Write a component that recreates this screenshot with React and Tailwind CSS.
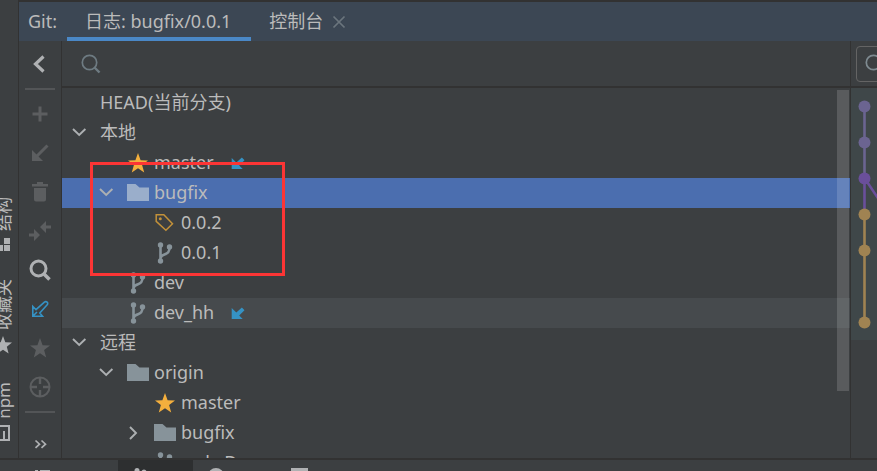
import clsx from 'clsx';

function Icon({ size = 22, className, children }) {
  return (
    <svg width={size} height={size} viewBox={`0 0 ${size} ${size}`} fill="none" className={clsx('shrink-0', className)}>
      {children}
    </svg>
  );
}

function StarIcon({ className }) {
  return (
    <Icon className={className}>
      <path fill="currentColor" d="M11 1l2.600 7.200 7.400.2-5.900 4.500 2.100 7.500L11 16.200l-6.200 4.200 2.100-7.500L1 8.400l7.400-.2z" />
    </Icon>
  );
}

function FolderIcon({ className }) {
  return (
    <Icon className={className}>
      <path fill="currentColor" d="M0 2h8.500l4 3.500H22V19H0z" />
    </Icon>
  );
}

function BranchIcon() {
  return (
    <Icon className="text-[#87939a]">
      <g fill="currentColor">
        <circle cx="6.500" cy="3" r="2.700" />
        <circle cx="6.500" cy="19" r="2.700" />
        <circle cx="15.500" cy="5" r="2.700" />
      </g>
      <path stroke="currentColor" strokeWidth="2.600" d="M6.500 3v16M15.500 5c0 5.500-2 6.500-4.500 7.300-2.200.7-4 1.400-4.500 3.700" />
    </Icon>
  );
}

function TagIcon() {
  return (
    <Icon className="text-[#c2913a]">
      <path stroke="currentColor" strokeWidth="1.500" d="M2.200 2.700h7.600l8.700 9-6.600 6.600-9.700-9z" />
      <circle cx="6.300" cy="6.700" r="1.500" fill="currentColor" />
    </Icon>
  );
}

function ChevronIcon({ open }) {
  return (
    <Icon className="text-[#adb0b2]">
      <path stroke="currentColor" strokeWidth="1.900" d={open ? 'M5 7l6.200 6 6.200-6' : 'M8 5l6 6-6 6'} />
    </Icon>
  );
}

function IncomingIcon() {
  return (
    <Icon size={14} className="text-[#3592c4]">
      <path fill="currentColor" d="M.700 2v11h11L8.200 9.500l5.300-5.300-2.600-2.600-5.600 5z" />
    </Icon>
  );
}

function SearchIcon({ className }) {
  return (
    <Icon className={className}>
      <circle cx="9.500" cy="9.500" r="7.200" stroke="currentColor" strokeWidth="1.700" />
      <path stroke="currentColor" strokeWidth="2.400" d="M14.500 14.500l5 5" />
    </Icon>
  );
}

const icons = {
  star: <StarIcon className="text-[#f4af3d]" />,
  folder: <FolderIcon className="text-[#87939a]" />,
  folderSelected: <FolderIcon className="text-[#9aaecb]" />,
  branch: <BranchIcon />,
  tag: <TagIcon />,
};

const indents = ['pl-[6px]', 'pl-[33px]', 'pl-[60px]'];

const rows = [
  { id: 'head', level: 0, label: 'HEAD(当前分支)' },
  { id: 'local', level: 0, label: '本地', open: true },
  { id: 'master', level: 1, label: 'master', icon: 'star', incoming: true },
  { id: 'bugfix', level: 1, label: 'bugfix', icon: 'folderSelected', open: true, selected: true },
  { id: '0.0.2', level: 2, label: '0.0.2', icon: 'tag' },
  { id: '0.0.1', level: 2, label: '0.0.1', icon: 'branch' },
  { id: 'dev', level: 1, label: 'dev', icon: 'branch' },
  { id: 'dev_hh', level: 1, label: 'dev_hh', icon: 'branch', incoming: true, current: true },
  { id: 'remote', level: 0, label: '远程', open: true },
  { id: 'origin', level: 1, label: 'origin', icon: 'folder', open: true },
  { id: 'origin/master', level: 2, label: 'master', icon: 'star' },
  { id: 'origin/bugfix', level: 2, label: 'bugfix', icon: 'folder', open: false },
  { id: 'origin/web', level: 2, label: 'web_Dev', icon: 'branch' },
];

function TreeRow({ row }) {
  return (
    <li
      className={clsx(
        'flex h-[30px] items-center whitespace-nowrap',
        indents[row.level],
        row.selected && 'bg-[#4b6eaf]',
        row.current && 'bg-[#464a4d]',
      )}
    >
      <span className="mr-2.5 flex w-[22px] shrink-0">{row.open !== undefined && <ChevronIcon open={row.open} />}</span>
      {row.icon && <span className="mr-[5px]">{icons[row.icon]}</span>}
      <span className="pb-0.5">{row.label}</span>
      {row.incoming && (
        <span className="ml-[17px]">
          <IncomingIcon />
        </span>
      )}
    </li>
  );
}

const tools = [
  {
    name: '新建分支',
    color: 'text-[#5c5e60]',
    art: <path stroke="currentColor" strokeWidth="3" d="M11 3.500v15M3.500 11h15" />,
  },
  {
    name: '更新',
    color: 'text-[#5c5e60]',
    art: (
      <>
        <path stroke="currentColor" strokeWidth="3" d="M18.500 3.500L8 14" />
        <path fill="currentColor" d="M3 8v11h11z" />
      </>
    ),
  },
  {
    name: '删除',
    color: 'text-[#5c5e60]',
    art: <path fill="currentColor" d="M3 3h5V1h6v2h5v2.500H3zM5 7h12v11.500a2 2 0 0 1-2 2H7a2 2 0 0 1-2-2z" />,
  },
  {
    name: '比较',
    color: 'text-[#5c5e60]',
    art: <path fill="currentColor" d="M11 7l6-6v4.500H22v3h-5V13zM11 15l-6 6v-4.500H0v-3h5V9z" />,
  },
  {
    name: '搜索',
    color: 'text-[#afb1b3]',
    art: (
      <>
        <circle cx="9.500" cy="9.500" r="7.500" stroke="currentColor" strokeWidth="3" />
        <path stroke="currentColor" strokeWidth="3.600" d="M14.500 14.500l6 6" />
      </>
    ),
  },
  {
    name: '我的分支',
    color: 'text-[#3592c4]',
    art: (
      <path
        stroke="currentColor"
        strokeWidth="1.600"
        d="M3.800 8.500v9.700h9.700l-2.700-3.200 7.400-8.200a1.600 1.600 0 0 0-2.800-2.600L7 11.700zM4 18l4-4"
      />
    ),
  },
  {
    name: '收藏',
    color: 'text-[#5c5e60]',
    art: <path fill="currentColor" d="M11 1l2.600 7.200 7.400.2-5.900 4.500 2.100 7.500L11 16.200l-6.200 4.200 2.100-7.500L1 8.400l7.400-.2z" />,
  },
  {
    name: '定位',
    color: 'text-[#5c5e60]',
    art: (
      <>
        <circle cx="11" cy="11" r="9.500" stroke="currentColor" strokeWidth="2" />
        <path stroke="currentColor" strokeWidth="2.400" d="M11 2v6M11 14v6M2 11h6M14 11h6" />
      </>
    ),
  },
];

function Toolbar() {
  return (
    <div className="flex w-[43px] shrink-0 flex-col items-center overflow-hidden border-r border-[#323232]">
      <button aria-label="收起" className="flex h-[47px] shrink-0 items-center text-[#afb1b3]">
        <Icon>
          <path stroke="currentColor" strokeWidth="3.200" d="M14.500 2.500l-8 7.500 8 7.500" />
        </Icon>
      </button>
      <div className="mb-1 h-[2px] w-[30px] shrink-0 bg-[#535557]" />
      {tools.map((t) => (
        <button key={t.name} aria-label={t.name} className={clsx('flex h-[39px] shrink-0 items-center', t.color)}>
          <Icon>{t.art}</Icon>
        </button>
      ))}
      <div className="mt-[5px] h-[2px] w-[30px] shrink-0 bg-[#535557]" />
      <button aria-label="更多" className="mt-5 shrink-0 text-[#afb1b3]">
        <Icon>
          <path stroke="currentColor" strokeWidth="1.700" d="M6.500 7.500l4 3.700-4 3.700M12.500 7.500l4 3.700-4 3.700" />
        </Icon>
      </button>
    </div>
  );
}

function SideTab({ label, icon, className }) {
  return (
    <button className={clsx('flex shrink-0 flex-col items-end', className)}>
      <span className="rotate-180 text-[17px] leading-5 [text-orientation:sideways] [writing-mode:vertical-rl]">{label}</span>
      <span className="mt-1.5 mr-0.5">{icon}</span>
    </button>
  );
}

// The strip is narrower than its tabs, so they run off its left edge
function SideStrip() {
  return (
    <div className="flex w-[19px] shrink-0 flex-col items-end overflow-hidden border-r border-[#323232] pt-[197px] pr-1">
      <SideTab
        label="结构"
        icon={
          <Icon size={18} className="text-[#afb1b3]">
            <path fill="currentColor" d="M10 1h6v6h-6zM10 8h6v6h-6zM3 8h6v6H3z" />
          </Icon>
        }
      />
      <SideTab
        label="收藏夹"
        className="mt-[24px]"
        icon={
          <Icon size={18} className="text-[#afb1b3]">
            <path fill="currentColor" d="M9 0l2.300 6.300 6.700.3-5.200 4.200 1.800 6.700L9 13.700l-5.600 3.800 1.800-6.700L0 6.600l6.700-.3z" />
          </Icon>
        }
      />
      <SideTab
        label="npm"
        className="mt-[28px]"
        icon={
          <Icon size={18} className="text-[#afb1b3]">
            <path stroke="currentColor" strokeWidth="2" d="M1 1h14v14H1zM10 6v9" />
          </Icon>
        }
      />
    </div>
  );
}

const commits = [
  { y: 18, color: '#6b6491' },
  { y: 54, color: '#6b6491' },
  { y: 90, color: '#6a4f9b' },
  { y: 126, color: '#a08352' },
  { y: 162, color: '#a08352' },
  { y: 234, color: '#a08352' },
];

function CommitLog() {
  return (
    <div className="flex w-[26px] shrink-0 flex-col overflow-hidden">
      <div className="flex h-[47px] shrink-0 items-center border-b-2 border-[#323232] pl-[5px]">
        <label className="flex h-9 w-60 shrink-0 items-center rounded border border-[#646464] pl-[7px]">
          <SearchIcon className="text-[#7f8b91]" />
          <input aria-label="搜索提交" className="w-full bg-transparent outline-none" />
        </label>
      </div>
      <div className="bg-[#3f4749]">
        <svg width="26" height="252" viewBox="0 0 26 252" className="block">
          <path stroke="#6b6491" strokeWidth="2.600" d="M13.500 18v72" />
          <path stroke="#6a4f9b" strokeWidth="2.600" d="M13.500 90v36M13.500 90l24 36" />
          <path stroke="#a08352" strokeWidth="2.600" d="M13.500 126v108" />
          {commits.map((c) => (
            <circle key={c.y} cx="13.500" cy={c.y + 0.5} r="6" fill={c.color} />
          ))}
        </svg>
      </div>
    </div>
  );
}

function Branches() {
  return (
    <div className="flex min-w-0 flex-1 flex-col border-r border-[#323232]">
      <label className="flex h-[47px] shrink-0 items-center border-b-2 border-[#323232] pl-[18px]">
        <SearchIcon className="text-[#6e7b82]" />
        <input aria-label="搜索分支" className="w-full bg-transparent outline-none" />
      </label>
      <div className="relative min-h-0 flex-1 overflow-hidden">
        <ul>
          {rows.map((row) => (
            <TreeRow key={row.id} row={row} />
          ))}
        </ul>
        <div className="absolute top-0.5 right-px h-[301px] w-3 bg-white/15" />
        <div className="absolute top-[74px] left-7 h-[114px] w-[195px] border-3 border-[#fc3535]" />
      </div>
    </div>
  );
}

function Tabs() {
  return (
    <div className="flex h-[41px] shrink-0 border-t-2 border-[#323232] bg-[#3c4754]">
      <span className="w-12 self-center pb-0.5 pl-[9px]">Git:</span>
      <button className="border-b-4 border-[#4a88c7] pt-0.5 pr-5 pl-[18px]">日志: bugfix/0.0.1</button>
      <button className="pb-0.5 pl-[18px]">控制台</button>
      <button aria-label="关闭" className="ml-[5px] text-[#6b757d]">
        <Icon>
          <path stroke="currentColor" strokeWidth="1.700" d="M5.500 5.500l11 11M16.500 5.500l-11 11" />
        </Icon>
      </button>
    </div>
  );
}

function BottomBar() {
  return (
    <div className="flex h-[13px] shrink-0 overflow-hidden border-t-2 border-[#323232] text-[#afb1b3]">
      <button aria-label="TODO" className="flex w-[118px] shrink-0 items-start pt-2 pl-[34px]">
        <Icon size={18}>
          <path fill="currentColor" d="M1 2h3v3H1zM6 2h10v3H6z" />
        </Icon>
      </button>
      <button aria-label="Git" className="flex w-[75px] shrink-0 items-start bg-[#2d2f30] pt-2 pl-[11px]">
        <Icon size={18}>
          <circle cx="8" cy="2.500" r="2.500" fill="currentColor" />
          <circle cx="15" cy="4" r="2.500" fill="currentColor" />
        </Icon>
      </button>
      <button aria-label="问题" className="flex w-[80px] shrink-0 items-start pt-2 pl-[14px]">
        <Icon size={18}>
          <circle cx="9" cy="8" r="8" fill="currentColor" />
        </Icon>
      </button>
      <button aria-label="终端" className="flex shrink-0 items-start pt-2 pl-[18px]">
        <Icon size={18}>
          <path fill="currentColor" d="M0 0h17v16H0z" />
        </Icon>
      </button>
    </div>
  );
}

export default function App() {
  return (
    <div className="flex h-screen flex-col overflow-hidden bg-[#3c3f41] font-['Noto_Sans','Noto_Sans_CJK_SC',sans-serif] text-lg leading-6 text-[#bbbbbb]">
      <div className="flex min-h-0 flex-1">
        <SideStrip />
        <div className="flex min-w-0 flex-1 flex-col">
          <Tabs />
          <div className="flex min-h-0 flex-1">
            <Toolbar />
            <Branches />
            <CommitLog />
          </div>
        </div>
      </div>
      <BottomBar />
    </div>
  );
}
